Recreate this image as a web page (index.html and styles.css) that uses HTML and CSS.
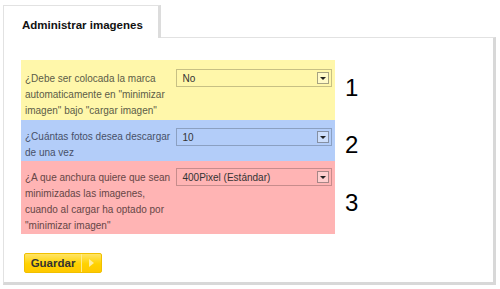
FILE: index.html
```html
<!DOCTYPE html>
<html lang="es">
<head>
    <meta charset="UTF-8">
    <meta name="viewport" content="width=device-width, initial-scale=1.0">
    <title>Administrar imagenes</title>
    <link rel="stylesheet" href="styles.css">
</head>
<body>

<div class="tabs">
    <div class="tab">Administrar imagenes</div>
</div>

<div class="panel">
    <div class="row">
        <div class="field field-yellow">
            <label class="label">¿Debe ser colocada la marca automaticamente en "minimizar imagen" bajo "cargar imagen"</label>
            <div class="select"><span class="value">No</span><span class="arrow"></span></div>
        </div>
        <div class="num num-1">1</div>
    </div>

    <div class="row">
        <div class="field field-blue">
            <label class="label">¿Cuántas fotos desea descargar de una vez</label>
            <div class="select"><span class="value">10</span><span class="arrow"></span></div>
        </div>
        <div class="num num-2">2</div>
    </div>

    <div class="row">
        <div class="field field-red">
            <label class="label">¿A que anchura quiere que sean minimizadas las imagenes, cuando al cargar ha optado por "minimizar imagen"</label>
            <div class="select"><span class="value">400Pixel (Estándar)</span><span class="arrow"></span></div>
        </div>
        <div class="num num-3">3</div>
    </div>

    <button class="save-button"><span class="save-text">Guardar</span><span class="save-icon"></span></button>
</div>

</body>
</html>
```

FILE: styles.css
```css
* {
    margin: 0;
    padding: 0;
    box-sizing: border-box;
}

body {
    font-family: "Liberation Sans", Arial, sans-serif;
    background-color: #fff;
    color: #333;
    padding: 5px 4px 0 3px;
}

.tabs {
    display: flex;
}

.tab {
    position: relative;
    z-index: 1;
    width: 158px;
    height: 33px;
    margin-bottom: -1px;
    padding: 13px 0 0 18px;
    background: #fff;
    border: 1px solid #e2e2e2;
    border-right: 3px solid #dcdcdc;
    border-bottom: none;
    font-size: 11.5px;
    font-weight: bold;
    color: #111;
}

.panel {
    width: 493px;
    height: 248px;
    border: 1px solid #e2e2e2;
    border-right: 3px solid #d8d8d8;
    border-bottom: 3px solid #d8d8d8;
    padding: 22px 0 0 17px;
}

.row {
    display: flex;
    align-items: flex-start;
}

.field {
    width: 314px;
    display: flex;
    align-items: flex-start;
    padding: 9px 3px 1px 4px;
}

.field-yellow {
    background: #fff7aa;
    height: 60px;
    padding-top: 11px;
}

.field-blue {
    background: #b3cdf9;
    height: 41px;
}

.field-red {
    background: #ffb4b4;
    height: 73px;
}

.label {
    width: 150px;
    font-size: 10px;
    line-height: 16px;
    color: #5c5c48;
}

.field-blue .label {
    color: #475068;
}

.field-red .label {
    color: #664646;
}

.select {
    width: 157px;
    height: 18px;
    margin-left: 3px;
    display: flex;
    align-items: center;
    justify-content: space-between;
    padding: 0 2px 0 5px;
    border: 1px solid rgba(0, 0, 0, 0.22);
    font-size: 10px;
    color: #333;
}

.field-yellow .select {
    margin-top: -2px;
}

.field-blue .select {
    margin-top: -1px;
}

.field-red .select {
    margin-top: -2px;
}

.arrow {
    width: 12px;
    height: 12px;
    border: 1px solid rgba(0, 0, 0, 0.35);
    background: rgba(255, 255, 255, 0.35);
    display: flex;
    align-items: center;
    justify-content: center;
}

.arrow::after {
    content: "";
    border-left: 3px solid transparent;
    border-right: 3px solid transparent;
    border-top: 3px solid #222;
}

.num {
    margin-left: 10px;
    font-size: 24px;
    line-height: 24px;
    color: #000;
}

.num-1 {
    margin-top: 16px;
}

.num-2 {
    margin-top: 13px;
}

.num-3 {
    margin-top: 30px;
}

.save-button {
    margin: 19px 0 0 3px;
    width: 78px;
    height: 20px;
    display: flex;
    align-items: stretch;
    border: 1px solid #f0c000;
    border-radius: 2px;
    background: linear-gradient(#ffe466, #ffd200 55%, #ffc800);
    font-family: "Liberation Sans", Arial, sans-serif;
    cursor: pointer;
}

.save-text {
    width: 57px;
    padding-top: 3px;
    text-align: center;
    font-size: 11.5px;
    font-weight: bold;
    color: #333;
    border-right: 1px solid #ffeb8a;
}

.save-icon {
    flex: 1;
    display: flex;
    align-items: center;
    justify-content: center;
}

.save-icon::after {
    content: "";
    border-top: 4px solid transparent;
    border-bottom: 4px solid transparent;
    border-left: 5px solid #ffeea0;
}
```
